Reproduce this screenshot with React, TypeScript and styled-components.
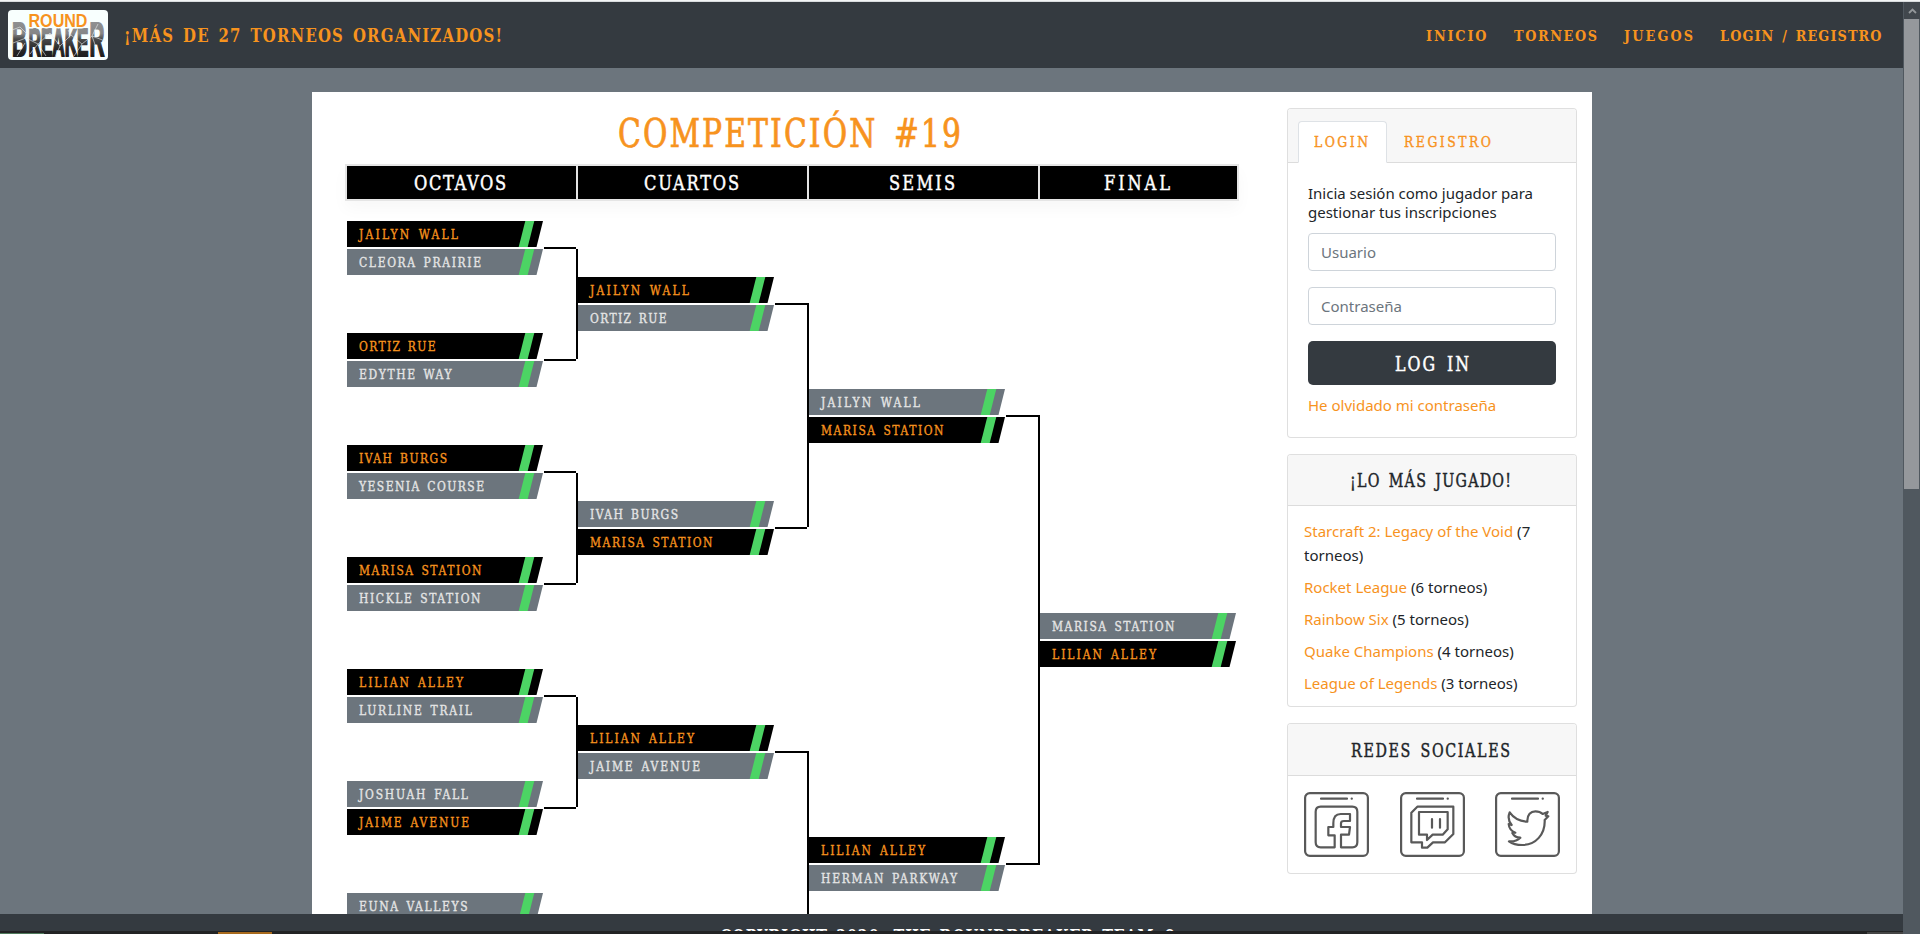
import React from "react";
import styled, { createGlobalStyle, css } from "styled-components";

const ORANGE = "#f7931e";
const GRAY = "#6c757d";
const DARK = "#343a40";
const SLAB = '"DejaVu Serif Condensed", "DejaVu Serif", serif';

const GlobalStyle = createGlobalStyle`
  * { box-sizing: border-box; }
  body {
    margin: 0;
    background: ${GRAY};
    color: #212529;
    font: 15px/24px "Noto Sans", sans-serif;
    overflow: hidden;
  }
`;

/* ---------- slab lettering ---------- */

const ruler = document.createElement("canvas").getContext("2d")!;

function tracking(text: string, width: number, size: number, bold: boolean, squeeze: number, gap: number) {
  ruler.font = `${bold ? "bold" : "normal"} ${size}px "DejaVu Serif Condensed"`;
  const natural = ruler.measureText(text).width + (text.split(" ").length - 1) * gap;
  return (width / squeeze - natural) / (text.length - 1);
}

const SlabBox = styled.span<{ $width: number; $size: number; $bold: boolean }>`
  display: block;
  flex: none;
  width: ${(p) => p.$width}px;
  font-family: ${SLAB};
  font-size: ${(p) => p.$size}px;
  font-weight: ${(p) => (p.$bold ? 700 : 400)};
  white-space: nowrap;
`;

const SlabInk = styled.span<{ $squeeze: number; $gap: number; $stroke: number }>`
  display: inline-block;
  vertical-align: top;
  transform: translateY(0.8px) scaleX(${(p) => p.$squeeze});
  transform-origin: 0 50%;
  word-spacing: ${(p) => p.$gap}px;
  -webkit-text-stroke: ${(p) => p.$stroke}px currentColor;
`;

interface SlabProps {
  text: string;
  width: number;
  size: number;
  bold?: boolean;
  squeeze?: number;
}

function Slab({ text, width, size, bold = false, squeeze = 0.88 }: SlabProps) {
  const gap = size * 0.15;
  return (
    <SlabBox $width={width} $size={size} $bold={bold}>
      <SlabInk
        $squeeze={squeeze}
        $gap={gap}
        $stroke={bold ? 0 : 0.15 + size * 0.015}
        style={{ letterSpacing: tracking(text, width, size, bold, squeeze, gap) }}
      >
        {text}
      </SlabInk>
    </SlabBox>
  );
}

/* ---------- window frame ---------- */

const Screen = styled.div`
  display: flex;
  flex-direction: column;
  width: 1920px;
  height: 934px;
  overflow: hidden;
`;

const TopEdge = styled.div`
  flex: none;
  height: 2px;
  background: #f3f5f5;
  border-bottom: 1px solid #d9dcde;
`;

const Viewport = styled.div`
  flex: 1;
  min-height: 0;
  display: flex;
`;

const Page = styled.div`
  width: 1903px;
  display: flex;
  flex-direction: column;
`;

const Scrollbar = styled.div`
  width: 17px;
  background: #50585f;
  padding: 0 1px;
`;

const ScrollButton = styled.div`
  height: 17px;
  margin-right: -1px;
  background: #41474d;
  display: flex;
  align-items: center;
  justify-content: center;
`;

const ScrollThumb = styled.div`
  height: 470px;
  background: #95989c;
`;

/* ---------- nav ---------- */

const Navbar = styled.nav`
  flex: none;
  height: 66px;
  background: ${DARK};
  color: ${ORANGE};
  display: flex;
  align-items: center;
  padding: 0 22px 0 8px;
  line-height: 22px;
`;

const LogoBox = styled.div`
  width: 100px;
  height: 50px;
  border-radius: 4px;
  background: #f8fffe;
  margin-right: 16px;
`;

const NavLinks = styled.div`
  margin-left: auto;
  display: flex;
  gap: 27px;
`;

function Logo() {
  return (
    <LogoBox>
      <svg width="100" height="50" viewBox="0 0 100 50">
        <defs>
          <linearGradient id="steel" gradientUnits="userSpaceOnUse" x1="0" y1="11" x2="0" y2="47">
            <stop offset="0" stopColor="#909192" />
            <stop offset="0.35" stopColor="#858687" />
            <stop offset="0.5" stopColor="#4a4b4c" />
            <stop offset="0.8" stopColor="#262627" />
            <stop offset="1" stopColor="#1d1d1e" />
          </linearGradient>
        </defs>
        <g fontFamily='"Liberation Sans", sans-serif' fontWeight="700" fill="url(#steel)" stroke="url(#steel)" strokeWidth="2">
          <text x="4" y="46" fontSize="48" textLength="15" lengthAdjust="spacingAndGlyphs">B</text>
          <text x="20.5" y="46" fontSize="38" textLength="60" lengthAdjust="spacingAndGlyphs">REAKE</text>
          <text x="81.5" y="46" fontSize="48" textLength="15" lengthAdjust="spacingAndGlyphs">R</text>
        </g>
        <text
          x="20.5" y="16.8" fontSize="19" fontWeight="700" fontFamily='"Liberation Sans", sans-serif'
          textLength="59" fill={ORANGE} stroke="#f8fffe" strokeWidth="3" paintOrder="stroke"
          lengthAdjust="spacingAndGlyphs"
        >
          ROUND
        </text>
        <path
          d="M4 20 L12 17 L19 24 M5 33 L18 28 L30 34 L42 23 M9 46 L17 33 M22 44 L30 34 L38 46 M42 23 L52 36 L47 47 M52 36 L63 25 L74 34 L66 46 M74 34 L84 26 L97 31 M84 26 L90 14 M84 26 L91 46 M60 20 L63 25"
          stroke="#e9efee" strokeWidth="0.6" fill="none"
        />
      </svg>
    </LogoBox>
  );
}

/* ---------- content ---------- */

const Content = styled.div`
  flex: none;
  width: 1280px;
  height: 822px;
  margin: 24px auto 0 312px;
  padding-left: 33px;
  background: #fff;
  display: flex;
  align-items: flex-start;
  overflow: hidden;
`;

const Tournament = styled.main`
  width: 894px;
  margin-right: 48px;
`;

const Title = styled.h1`
  margin: 12px 5px 4px 0;
  height: 56px;
  line-height: 57px;
  font-weight: 400;
  color: ${ORANGE};
  display: flex;
  justify-content: center;
`;

const Rounds = styled.div`
  display: grid;
  grid-template-columns: 229px 229px 229px 197px;
  column-gap: 2px;
  width: 894px;
  padding: 2px;
  background: #e5e5e5;
  box-shadow: 0 8px 16px rgba(0, 0, 0, 0.03);
`;

const RoundCell = styled.div`
  height: 33px;
  line-height: 33px;
  padding-right: 3px;
  background: #000;
  color: #fff;
  display: flex;
  justify-content: center;
`;

const Bracket = styled.div`
  display: flex;
  margin: -9px 0 0 2px;
`;

const Column = styled.div`
  width: 231px;
`;

const Slot = styled.div<{ $height: number }>`
  height: ${(p) => p.$height}px;
  display: flex;
  align-items: center;
`;

const Match = styled.div`
  width: 196px;
  height: 54px;
  margin-right: 1px;
  display: flex;
  flex-direction: column;
  gap: 2px;
`;

const Bar = styled.div<{ $winner: boolean }>`
  height: 26px;
  line-height: 26px;
  padding: 0 11.6px 0 11.6px;
  display: flex;
  justify-content: space-between;
  clip-path: polygon(0 0, 100% 0, calc(100% - 6.5px) 100%, 0 100%);
  background: ${(p) => (p.$winner ? "#000" : GRAY)};
  color: ${(p) => (p.$winner ? ORANGE : "#e5e5e5")};
`;

const Stripe = styled.i`
  width: 9.3px;
  background: #4cd464;
  transform: skewX(-14.2deg);
`;

const Arm = styled.i`
  width: 32px;
  height: 2px;
  background: #000;
`;

const Stem = styled.i<{ $down: boolean; $corner: boolean }>`
  width: 2px;
  height: calc(50% + ${(p) => (p.$corner ? 1 : -1)}px);
  align-self: ${(p) => (p.$down ? "flex-end" : "flex-start")};
  background: #000;
`;

const nameWidths: Record<string, number> = {
  "JAILYN WALL": 99,
  "CLEORA PRAIRIE": 122,
  "ORTIZ RUE": 76.5,
  "EDYTHE WAY": 92.5,
  "IVAH BURGS": 88,
  "YESENIA COURSE": 125,
  "MARISA STATION": 122.5,
  "HICKLE STATION": 121.5,
  "LILIAN ALLEY": 104,
  "LURLINE TRAIL": 113,
  "JAIME AVENUE": 110,
  "JOSHUAH FALL": 109,
  "EUNA VALLEYS": 108.5,
  "HERMAN PARKWAY": 136,
};

type Pairing = { players: string[]; winner: number };
const pair = (winner: number, ...players: string[]): Pairing => ({ players, winner });

const bracket: Pairing[][] = [
  [
    pair(0, "JAILYN WALL", "CLEORA PRAIRIE"),
    pair(0, "ORTIZ RUE", "EDYTHE WAY"),
    pair(0, "IVAH BURGS", "YESENIA COURSE"),
    pair(0, "MARISA STATION", "HICKLE STATION"),
    pair(0, "LILIAN ALLEY", "LURLINE TRAIL"),
    pair(1, "JOSHUAH FALL", "JAIME AVENUE"),
    pair(1, "EUNA VALLEYS"),
  ],
  [
    pair(0, "JAILYN WALL", "ORTIZ RUE"),
    pair(1, "IVAH BURGS", "MARISA STATION"),
    pair(0, "LILIAN ALLEY", "JAIME AVENUE"),
    pair(1),
  ],
  [pair(1, "JAILYN WALL", "MARISA STATION"), pair(0, "LILIAN ALLEY", "HERMAN PARKWAY")],
  [pair(1, "MARISA STATION", "LILIAN ALLEY")],
];

/* ---------- sidebar ---------- */

const Sidebar = styled.aside`
  width: 290px;
  padding-top: 16px;
  display: flex;
  flex-direction: column;
  gap: 16px;
`;

const Card = styled.section<{ $height: number }>`
  height: ${(p) => p.$height}px;
  border: 1px solid rgba(0, 0, 0, 0.125);
  border-radius: 4px;
  background: #fff;
`;

const headerSkin = css`
  background: #f7f7f7;
  border-bottom: 1px solid #dcdcdc;
  border-radius: 3px 3px 0 0;
  display: flex;
`;

const CardTitle = styled.div<{ $height: number }>`
  ${headerSkin}
  height: ${(p) => p.$height}px;
  line-height: ${(p) => p.$height - 1}px;
  padding-right: 4px;
  justify-content: center;
`;

const Tabs = styled.div`
  ${headerSkin}
  height: 54px;
  padding: 12px 10px 0;
`;

const Tab = styled.div<{ $active?: boolean }>`
  height: 42px;
  line-height: 39px;
  padding: 0 16px;
  color: ${ORANGE};
  border: 1px solid transparent;
  ${(p) =>
    p.$active &&
    css`
      width: 89px;
      padding: 0 15px;
      background: #fff;
      border-color: #dee2e6 #dee2e6 #fff;
      border-radius: 4px 4px 0 0;
    `}
`;

const LoginForm = styled.div`
  padding: 21px 20px 20px;
  display: flex;
  flex-direction: column;
`;

const Intro = styled.p`
  margin: 0 0 11px;
  line-height: 19.2px;
`;

const Field = styled.input`
  width: 248px;
  height: 38px;
  margin: 0 0 16px;
  padding: 0 12px;
  border: 1px solid #ced4da;
  border-radius: 4px;
  font: inherit;
  &::placeholder { color: ${GRAY}; opacity: 1; }
`;

const LoginButton = styled.button`
  height: 44px;
  margin: 0 0 8px;
  padding: 0;
  border: 0;
  border-radius: 5px;
  background: ${DARK};
  color: #fff;
  display: flex;
  align-items: center;
  justify-content: center;
  text-align: left;
`;

const Link = styled.a`
  color: ${ORANGE};
`;

const Ranking = styled.div`
  padding: 13px 16px 0;
  display: flex;
  flex-direction: column;
  gap: 8px;
`;

const Socials = styled.div`
  padding: 16px 16px 0;
  display: flex;
  justify-content: space-between;
`;

const games: [string, number][] = [
  ["Starcraft 2: Legacy of the Void", 7],
  ["Rocket League", 6],
  ["Rainbow Six", 5],
  ["Quake Champions", 4],
  ["League of Legends", 3],
];

const socialShapes = [
  "M92 166 V130 H73 V105 H88 V94 C88 74 98 66 110 66 H138 V87 H120 Q111 87 111 94 V105 H138 L135 128 H111 V166 H145 Q160 166 160 151 V59 Q160 44 145 44 H50 Q35 44 35 59 V151 Q35 166 50 166 Z",
  "M52 44 H160 V126 L135 151 H99 L82 167 H66 V151 H34 V62 Z M57 60 H143 V112 L128 128 H98 L81 144 V128 H57 Z M96 81 V107 M120 81 V107",
  "M44 61 C56 78 76 88 97 89 C96 67 108 58 121 58 C131 58 138 61 143 66 L158 60 L152 71 L160 73 L149 84 C151 127 122 159 82 159 C64 159 50 154 42 148 C55 149 67 146 76 137 C64 137 56 131 52 123 L61 122 C48 117 42 108 41 96 L50 99 C41 88 39 73 44 61 Z",
];

const SocialIcon = ({ d }: { d: string }) => (
  <svg width="65" height="65" viewBox="0 0 195 195" fill="none" stroke="#595959" strokeWidth="6.6" strokeLinejoin="round" strokeLinecap="round">
    <rect x="3.3" y="3.3" width="188.4" height="188.4" rx="14" />
    <path d="M51 20 H129 M143 20 H143.5" />
    <path d={d} />
  </svg>
);

/* ---------- footer ---------- */

const Footer = styled.footer`
  flex: none;
  height: 17px;
  padding: 10px 0 0 720px;
  line-height: 24px;
  background: ${DARK};
  color: #fff;
  overflow: hidden;
`;

const Taskbar = styled.div`
  flex: none;
  height: 3px;
  background: #222324;
  display: flex;
  align-items: flex-end;
`;

const TaskMark = styled.i<{ $left: number; $width: number; $height: number; $color: string }>`
  margin-left: ${(p) => p.$left}px;
  width: ${(p) => p.$width}px;
  height: ${(p) => p.$height}px;
  background: ${(p) => p.$color};
`;

export default function App() {
  return (
    <Screen>
      <GlobalStyle />
      <TopEdge />
      <Viewport>
        <Page>
          <Navbar>
            <Logo />
            <Slab text="¡MÁS DE 27 TORNEOS ORGANIZADOS!" width={378} size={18} bold squeeze={0.92} />
            <NavLinks>
              <Slab text="INICIO" width={60.5} size={15} bold squeeze={0.95} />
              <Slab text="TORNEOS" width={83} size={15} bold squeeze={0.95} />
              <Slab text="JUEGOS" width={69} size={15} bold squeeze={0.95} />
              <Slab text="LOGIN / REGISTRO" width={161.5} size={15} bold squeeze={0.95} />
            </NavLinks>
          </Navbar>
          <Content>
            <Tournament>
              <Title>
                <Slab text="COMPETICIÓN #19" width={343} size={38.5} squeeze={0.86} />
              </Title>
              <Rounds>
                <RoundCell><Slab text="OCTAVOS" width={92} size={20.5} squeeze={0.88} /></RoundCell>
                <RoundCell><Slab text="CUARTOS" width={95} size={20.5} squeeze={0.88} /></RoundCell>
                <RoundCell><Slab text="SEMIS" width={66} size={20.5} squeeze={0.88} /></RoundCell>
                <RoundCell><Slab text="FINAL" width={66} size={20.5} squeeze={0.88} /></RoundCell>
              </Rounds>
              <Bracket>
                {bracket.map((matches, round) => (
                  <Column key={round}>
                    {matches.map((match, i) => (
                      <Slot key={i} $height={112 * 2 ** round}>
                        <Match>
                          {match.players.map((name, n) => (
                            <Bar key={name} $winner={n === match.winner}>
                              <Slab text={name} width={nameWidths[name]} size={13} squeeze={0.92} />
                              <Stripe />
                            </Bar>
                          ))}
                        </Match>
                        {round < 3 && (
                          <>
                            <Arm />
                            <Stem $down={i % 2 === 0} $corner={round === 2 || (round === 1 && i % 2 === 0)} />
                          </>
                        )}
                      </Slot>
                    ))}
                  </Column>
                ))}
              </Bracket>
            </Tournament>
            <Sidebar>
              <Card $height={330}>
                <Tabs>
                  <Tab $active><Slab text="LOGIN" width={54} size={15} squeeze={0.92} /></Tab>
                  <Tab><Slab text="REGISTRO" width={87} size={15} squeeze={0.92} /></Tab>
                </Tabs>
                <LoginForm>
                  <Intro>Inicia sesión como jugador para gestionar tus inscripciones</Intro>
                  <Field placeholder="Usuario" />
                  <Field placeholder="Contraseña" />
                  <LoginButton><Slab text="LOG IN" width={74} size={19.5} squeeze={0.9} /></LoginButton>
                  <Link>He olvidado mi contraseña</Link>
                </LoginForm>
              </Card>
              <Card $height={253}>
                <CardTitle $height={51}><Slab text="¡LO MÁS JUGADO!" width={161} size={18} squeeze={0.88} /></CardTitle>
                <Ranking>
                  {games.map(([game, count]) => (
                    <div key={game}>
                      <Link>{game}</Link> ({count} torneos)
                    </div>
                  ))}
                </Ranking>
              </Card>
              <Card $height={151}>
                <CardTitle $height={52}><Slab text="REDES SOCIALES" width={159} size={18} squeeze={0.88} /></CardTitle>
                <Socials>
                  {socialShapes.map((d) => <SocialIcon key={d} d={d} />)}
                </Socials>
              </Card>
            </Sidebar>
          </Content>
          <Footer>
            <Slab text="COPYRIGHT 2020, THE ROUNDBREAKER TEAM ©" width={457} size={20} bold squeeze={0.8} />
          </Footer>
          <Taskbar>
            <TaskMark $left={0} $width={44} $height={1} $color="#4f7a5c" />
            <TaskMark $left={174} $width={54} $height={2} $color="#a86a1c" />
            <TaskMark $left={1595} $width={36} $height={2} $color="#454545" />
          </Taskbar>
        </Page>
        <Scrollbar>
          <ScrollButton>
            <svg width="9" height="6" viewBox="0 0 9 6" fill="none" stroke="#93979a" strokeWidth="1.8">
              <path d="M1 5 L4.5 1.5 L8 5" />
            </svg>
          </ScrollButton>
          <ScrollThumb />
        </Scrollbar>
      </Viewport>
    </Screen>
  );
}
